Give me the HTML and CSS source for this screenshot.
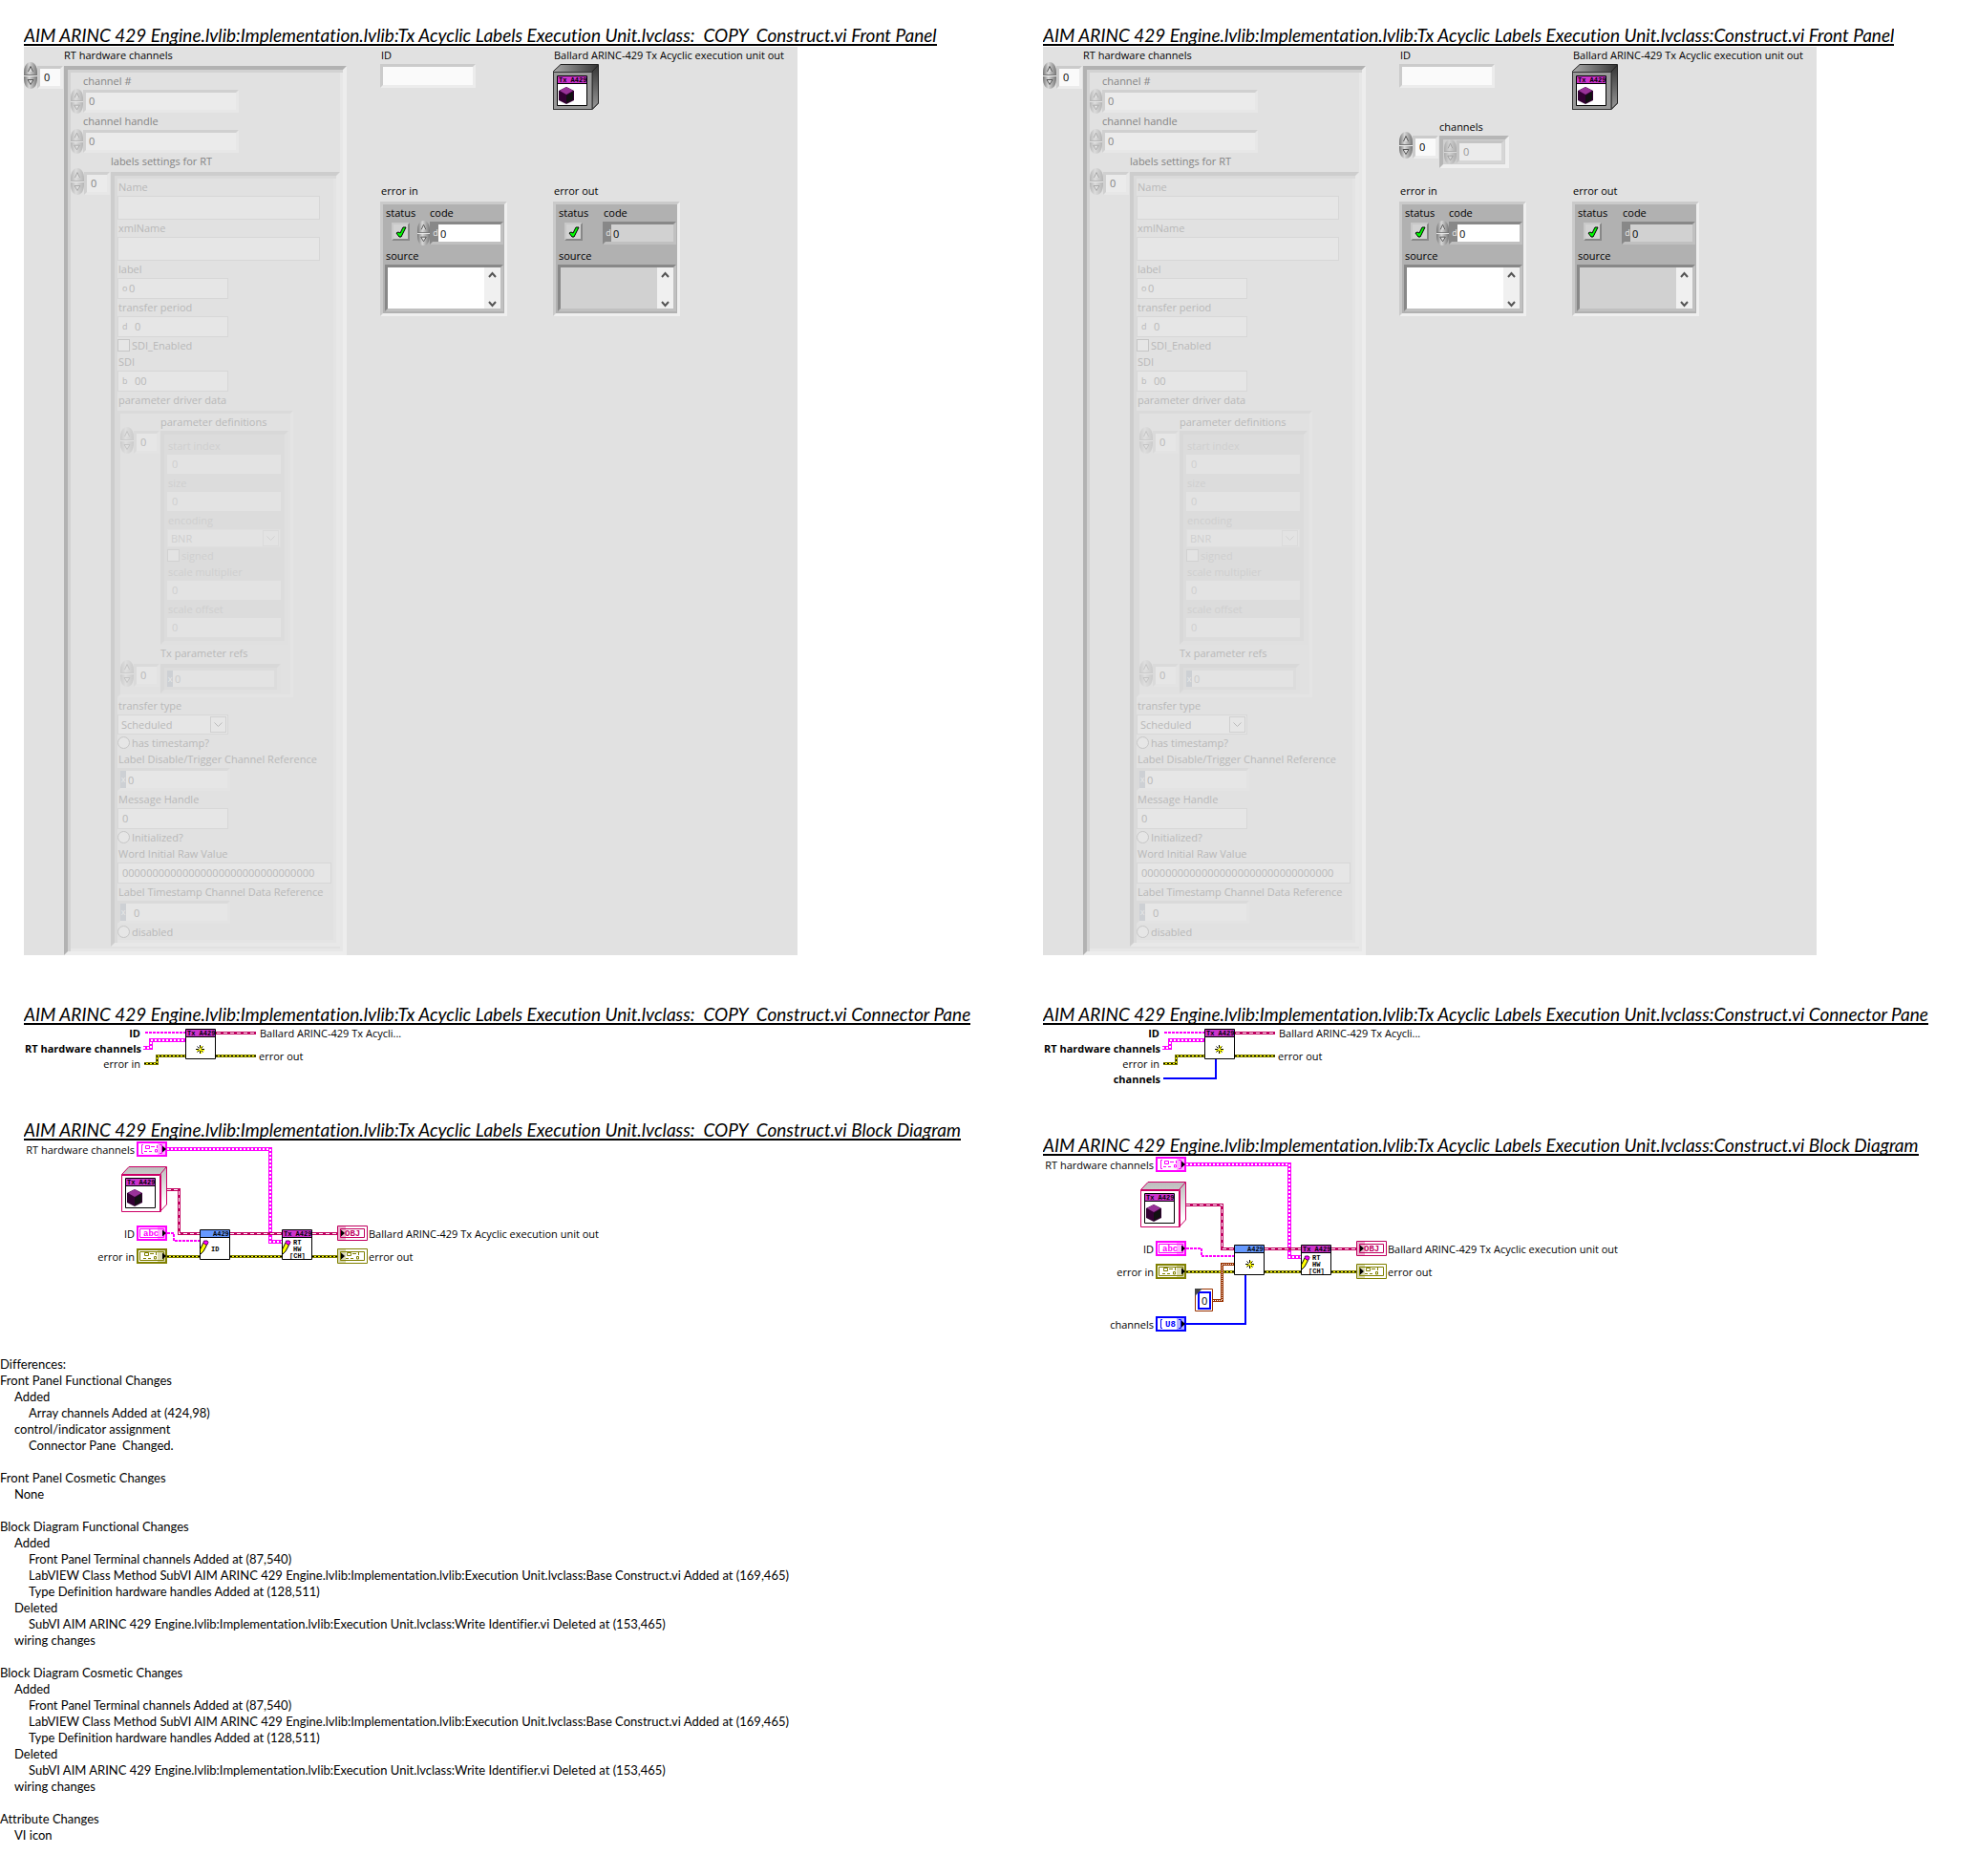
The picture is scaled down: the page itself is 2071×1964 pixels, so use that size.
FILE: index.html
```html
<!DOCTYPE html>
<html lang="en">
<head>
<meta charset="utf-8">
<title>VI comparison report</title>
<link rel="stylesheet" href="styles.css">
</head>
<body>
<svg class="defs" width="0" height="0" aria-hidden="true">
  <defs>
    <linearGradient id="metal" x1="0" x2="1" y1="0" y2="0">
      <stop offset="0" stop-color="#777"/><stop offset=".4" stop-color="#d8d8d8"/><stop offset="1" stop-color="#777"/>
    </linearGradient>
    <linearGradient id="side" x1="0" x2="0" y1="0" y2="1">
      <stop offset="0" stop-color="#333"/><stop offset="1" stop-color="#999"/>
    </linearGradient>
    <linearGradient id="top" x1="0" x2="1" y1="0" y2="0">
      <stop offset="0" stop-color="#aaa"/><stop offset="1" stop-color="#333"/>
    </linearGradient>
    <linearGradient id="pale" x1="0" x2="0" y1="0" y2="1">
      <stop offset="0" stop-color="#bbb"/><stop offset=".8" stop-color="#fff"/>
    </linearGradient>
    <symbol id="spin-up" viewBox="0 0 14 14">
      <path d="M0 14V11C0 4 3 0 7 0S14 4 14 11V14Z" fill="url(#metal)"/>
      <path d="M0 13.500H14" stroke="#777"/>
      <path d="M4.500 10L7 4.500L9.500 10" fill="#ddd" stroke="#555"/>
    </symbol>
    <symbol id="spin-down" viewBox="0 0 14 14">
      <path d="M0 0V3C0 10 3 14 7 14S14 10 14 3V0Z" fill="url(#metal)"/>
      <path d="M0 .5H14" stroke="#eee"/>
      <path d="M4 4.500H10L7 9.500Z" fill="#ddd" stroke="#555"/>
    </symbol>
    <symbol id="chevron-up" viewBox="0 0 9 7"><path d="M1 6L4.500 2L8 6" fill="none" stroke="#555" stroke-width="2"/></symbol>
    <symbol id="chevron-down" viewBox="0 0 9 7"><path d="M1 1L4.500 5L8 1" fill="none" stroke="#555" stroke-width="2"/></symbol>
    <symbol id="chevron-thin" viewBox="0 0 9 7"><path d="M.5 1.500L4.500 5.500L8.500 1.500" fill="none" stroke="#bbb"/></symbol>
    <symbol id="check" viewBox="0 0 12 12"><path d="M1 7L3 6L5 7L8 1L11 1L6 11L4 11Z" fill="#0f0" stroke="#000"/></symbol>
    <symbol id="hexcube" viewBox="0 0 16 18">
      <path d="M8 0L16 4V14L8 18L0 14V4Z" fill="#330033"/>
      <path d="M8 0L15 4L8 8L1 4Z" fill="#993399"/>
      <path d="M8 9L15 5V13L8 17Z" fill="#111"/>
    </symbol>
    <symbol id="class-face" viewBox="0 0 32 32">
      <path d="M.5 .5H31.500V31.500H.5Z" fill="#fff" stroke="#000"/>
      <path d="M1 1H31V8H1Z" fill="#cc33cc"/><path d="M0 8.500H32" stroke="#000"/>
      <text class="px" x="2" y="7">Tx A429</text>
      <use href="#hexcube" x="2" y="12" width="16" height="18"/>
    </symbol>
    <symbol id="star" viewBox="0 0 10 10">
      <path d="M5.500 1V9M1 5.500H9" stroke="#ff0" stroke-width="2"/>
      <path d="M4.500 0V3M4.500 6V9M0 4.500H3M6 4.500H9M1.500 1.500L3.500 3.500M7.500 1.500L5.500 3.500M1.500 7.500L3.500 5.500M7.500 7.500L6 6" fill="none" stroke="#000"/>
    </symbol>
    <symbol id="pencil" viewBox="0 0 10 16">
      <path d="M4 3L7.500 5.500L4 12L.5 15.500V10Z" fill="#ff0" stroke="#000"/><path d="M4.500 1H8L9 2.500L8 5H6L4 3Z" fill="#f0f" stroke="#606"/>
    </symbol>
    <symbol id="vi-purple" viewBox="0 0 32 32">
      <path d="M.5 .5H31.500V31.500H.5Z" fill="#fff" stroke="#000"/>
      <path d="M1 1H31V8H1Z" fill="#cc33cc"/><path d="M0 8.500H32" stroke="#000"/>
      <text class="px" x="2" y="7">Tx A429</text>
    </symbol>
    <symbol id="vi-blue" viewBox="0 0 32 32">
      <path d="M.5 .5H31.500V31.500H.5Z" fill="#fff" stroke="#000"/>
      <path d="M1 1H31V8H1Z" fill="#6699ff"/><path d="M0 8.500H32" stroke="#000"/>
      <text class="px" x="14" y="7">A429</text>
    </symbol>
    <symbol id="vi-handles" viewBox="0 0 32 32">
      <use href="#vi-purple" width="32" height="32"/>
      <use href="#pencil" x="0" y="11" width="10" height="16"/>
      <text class="px" x="12" y="16">RT</text><text class="px" x="12" y="23">HW</text><text class="px" x="8" y="30">[CH]</text>
    </symbol>
    <symbol id="class-const" viewBox="0 0 48 48">
      <path d="M1 8L8 .5H47.500V40L41 47H1Z" fill="url(#pale)" stroke="#cc0066"/>
      <path d="M.5 8.500H41.500V47.500H.5Z" fill="#fff" stroke="#cc0066"/><path d="M1 9.500H40.500V47" fill="none" stroke="#cc0066"/><path d="M41 8L47 1" stroke="#cc0066"/>
      <use href="#class-face" x="4" y="12" width="32" height="32"/>
    </symbol>
    <symbol id="bits" viewBox="0 0 18 8">
      <path d="M2.500 .5H6.500V3.500H2.500ZM8 1.500H12M14.500 0V3M1 6.500H4M6 6.500H9M12.500 4.500H14.500V7H12.500Z" fill="none" stroke="currentColor"/>
    </symbol>
    <symbol id="term-in" viewBox="0 0 32 16">
      <path d="M1 1H31V15H1Z" fill="#fff" stroke="currentColor" stroke-width="2"/>
      <path d="M3.500 3.500H28.500V12.500H3.500Z" fill="none" stroke="currentColor"/>
      <path d="M22 2H30V14H22Z" fill="currentColor" opacity=".3"/><path d="M27 4.500L31 8L27 11.500Z" fill="#000"/>
    </symbol>
    <symbol id="term-out" viewBox="0 0 32 16">
      <path d="M.5 .5H31.500V15.500H.5Z" fill="#fff" stroke="currentColor"/>
      <path d="M3.500 3.500H28.500V12.500H3.500Z" fill="none" stroke="currentColor"/>
      <path d="M1 1H9V15H1Z" fill="currentColor" opacity=".3"/><path d="M4 4.500L8 8L4 11.500Z" fill="#000"/>
    </symbol>
    <symbol id="term-array" viewBox="0 0 32 16">
      <path d="M1 1H31V15H1Z" fill="#fff" stroke="currentColor" stroke-width="2"/>
      <path d="M7 3.500H5.500V12.500H7M24 3.500H26.500V12.500H24" fill="none" stroke="currentColor"/>
      <path d="M22 2H30V14H22Z" fill="currentColor" opacity=".3"/><path d="M27 4.500L31 8L27 11.500Z" fill="#000"/>
    </symbol>
    <symbol id="object" viewBox="0 0 48 48">
      <path d="M.5 7.500L8 .5H47.500V41L41 47.500H.5Z" fill="url(#top)" stroke="#222"/>
      <path d="M41 8L47.500 1V41L41 47.500Z" fill="url(#side)" stroke="#222"/>
      <path d="M.5 8.500H41V47.500H.5Z" fill="#999" stroke="#333"/>
      <use href="#class-face" x="4" y="12" width="32" height="32"/>
    </symbol>
  </defs>
</svg>

<template id="hardware-channels">
  <div class="array">
    <span class="caption indented">RT hardware channels</span>
    <div class="array-body">
      <div class="index"><span class="spin"></span><input class="sunk" aria-label="RT hardware channels index" value="0"></div>
      <div class="cluster outer">
        <label class="field"><span class="caption nudge">channel #</span><span class="row"><span class="spin small"></span><input class="sunk wide" value="0"></span></label>
        <label class="field"><span class="caption nudge">channel handle</span><span class="row"><span class="spin small"></span><input class="sunk wide" value="0"></span></label>
        <span class="caption indented">labels settings for RT</span>
        <div class="array-body">
          <div class="index"><span class="spin"></span><input class="sunk" aria-label="labels settings index" value="0"></div>
          <div class="cluster labels">
            <label class="field"><span class="caption">Name</span><input class="flat tall"></label>
            <label class="field"><span class="caption">xmlName</span><input class="flat tall"></label>
            <label class="field"><span class="caption">label</span><span class="flat radix"><i>o</i><input value="0"></span></label>
            <label class="field"><span class="caption">transfer period</span><span class="flat radix spaced"><i>d</i><input value="0"></span></label>
            <label class="tick"><input type="checkbox">SDI_Enabled</label>
            <label class="field"><span class="caption">SDI</span><span class="flat radix spaced"><i>b</i><input value="00"></span></label>
            <span class="caption">parameter driver data</span>
            <div class="driver">
              <span class="caption indented">parameter definitions</span>
              <div class="array-body flush">
                <div class="index"><span class="spin"></span><input class="sunk" aria-label="parameter definitions index" value="0"></div>
                <div class="cluster definitions">
                  <label class="field"><span class="caption">start index</span><input class="faint" value="0"></label>
                  <label class="field"><span class="caption">size</span><input class="faint" value="0"></label>
                  <label class="field"><span class="caption">encoding</span><span class="choice short"><select><option>BNR</option></select><svg><use href="#chevron-thin"/></svg></span></label>
                  <label class="tick"><input type="checkbox">signed</label>
                  <label class="field"><span class="caption">scale multiplier</span><input class="faint" value="0"></label>
                  <label class="field"><span class="caption">scale offset</span><input class="faint" value="0"></label>
                </div>
              </div>
              <span class="caption indented">Tx parameter refs</span>
              <div class="array-body">
                <div class="index"><span class="spin"></span><input class="sunk" aria-label="Tx parameter refs index" value="0"></div>
                <div class="cluster refs"><span class="hex"><i>x</i><input aria-label="Tx parameter ref" value="0"></span></div>
              </div>
            </div>
            <label class="field"><span class="caption">transfer type</span><span class="choice"><select><option>Scheduled</option></select><svg><use href="#chevron-thin"/></svg></span></label>
            <label class="tick"><input type="radio">has timestamp?</label>
            <label class="field"><span class="caption">Label Disable/Trigger Channel Reference</span><span class="sunk hex"><i>x</i><input value="0"></span></label>
            <label class="field"><span class="caption">Message Handle</span><input class="flat" value="0"></label>
            <label class="tick"><input type="radio">Initialized?</label>
            <label class="field"><span class="caption">Word Initial Raw Value</span><input class="flat long" value="00000000000000000000000000000000"></label>
            <label class="field"><span class="caption">Label Timestamp Channel Data Reference</span><span class="sunk hex spaced"><i>x</i><input value="0"></span></label>
            <label class="tick"><input type="radio">disabled</label>
          </div>
        </div>
      </div>
    </div>
  </div>
</template>

<template id="errors">
  <div class="error">
    <span class="caption">error in</span>
    <div class="error-box">
      <div class="error-row">
        <div class="status"><span class="caption">status</span><button type="button" aria-label="status"><svg><use href="#check"/></svg></button></div>
        <label class="code"><span class="caption">code</span><span class="row"><span class="spin small"></span><span class="sunk hex"><i>d</i><input value="0"></span></span></label>
      </div>
      <label class="source"><span class="caption">source</span><span class="sunk"><textarea></textarea><span class="scroll"><svg><use href="#chevron-up"/></svg><svg><use href="#chevron-down"/></svg></span></span></label>
    </div>
  </div>
  <div class="error readonly">
    <span class="caption">error out</span>
    <div class="error-box">
      <div class="error-row">
        <div class="status"><span class="caption">status</span><button type="button" aria-label="status"><svg><use href="#check"/></svg></button></div>
        <label class="code"><span class="caption">code</span><span class="row"><span class="sunk hex"><i>d</i><input value="0" readonly></span></span></label>
      </div>
      <label class="source"><span class="caption">source</span><span class="sunk"><textarea readonly></textarea><span class="scroll"><svg><use href="#chevron-up"/></svg><svg><use href="#chevron-down"/></svg></span></span></label>
    </div>
  </div>
</template>

<main class="compare">
  <section class="version">
    <h2>AIM ARINC 429 Engine.lvlib:Implementation.lvlib:Tx Acyclic Labels Execution Unit.lvclass:&nbsp; COPY&nbsp; Construct.vi Front Panel</h2>
    <div class="panel">
      <div data-template="hardware-channels"></div>
      <div class="controls">
        <label class="field"><span class="caption">ID</span><input class="sunk id"></label>
        <div class="field"><span class="caption">Ballard ARINC-429 Tx Acyclic execution unit out</span><svg class="object"><use href="#object"/></svg></div>
        <div class="channels"></div>
        <div class="errors" data-template="errors"></div>
      </div>
    </div>
    <h2>AIM ARINC 429 Engine.lvlib:Implementation.lvlib:Tx Acyclic Labels Execution Unit.lvclass:&nbsp; COPY&nbsp; Construct.vi Connector Pane</h2>
    <svg class="diagram" width="500" height="47">
      <g class="wires">
        <path class="string" d="M127 7H169"/>
        <path class="pink" d="M125 23H133V15H169"/><path class="hatch" d="M125 23H133V15H169"/>
        <path class="olive" d="M126 39.500H139.500V31.500H169M201 31.500H243"/><path class="yellow" d="M126 39.500H139.500V31.500H169M201 31.500H243"/><path class="dots" d="M126 39.500H139.500V31.500H169M201 31.500H243"/>
        <path class="red" d="M201 7.500H243"/><path class="dash" d="M202 7.500H242"/>
      </g>
      <use href="#vi-purple" x="169" y="3" width="32" height="32"/><use href="#star" x="180" y="20" width="10" height="10"/>
      <text class="end bold" x="122" y="12">ID</text><text class="end bold" x="123" y="28">RT hardware channels</text><text class="end" x="122" y="44">error in</text>
      <text x="247" y="12">Ballard ARINC-429 Tx Acycli...</text><text x="246" y="36">error out</text>
    </svg>
    <h2>AIM ARINC 429 Engine.lvlib:Implementation.lvlib:Tx Acyclic Labels Execution Unit.lvclass:&nbsp; COPY&nbsp; Construct.vi Block Diagram</h2>
    <svg class="diagram" width="700" height="130">
      <g class="wires">
        <path class="pink" d="M150 8H258V105H270"/><path class="hatch" d="M150 8H258V105H270"/>
        <path class="red" d="M150 50.500H162.500V96.500H184M216 96.500H270M302 96.500H328"/><path class="dash" d="M150 50.500H162.500V96.500H184M216 96.500H270M302 96.500H328"/>
        <path class="string" d="M150 96H157V104H184"/>
        <path class="olive" d="M150 120.500H184M216 120.500H270M302 120.500H328"/><path class="yellow" d="M150 120.500H184M216 120.500H270M302 120.500H328"/><path class="dots" d="M150 120.500H184M216 120.500H270M302 120.500H328"/>
      </g>
      <g class="c-pink"><use href="#term-array" x="118" width="32" height="16"/><use href="#bits" x="125" y="4" width="18" height="8"/><use href="#term-in" x="118" y="88" width="32" height="16"/><text class="type" x="125" y="99">abc</text></g>
      <g class="c-olive"><use href="#term-in" x="118" y="112" width="32" height="16"/><use href="#bits" x="124" y="116" width="18" height="8"/><use href="#term-out" x="328" y="112" width="32" height="16"/><use href="#bits" x="336" y="116" width="18" height="8"/></g>
      <g class="c-red"><use href="#term-out" x="328" y="88" width="32" height="16"/><text class="type" x="336" y="99">OBJ</text></g>
      <use href="#class-const" x="102" y="26" width="48" height="48"/>
      <use href="#vi-blue" x="184" y="92" width="32" height="32"/><use href="#pencil" x="184" y="103" width="10" height="16"/><text class="px" x="196" y="115">ID</text>
      <use href="#vi-handles" x="270" y="92" width="32" height="32"/>
      <text class="end" x="116" y="13">RT hardware channels</text><text class="end" x="116" y="101">ID</text><text class="end" x="116" y="125">error in</text>
      <text x="361" y="101">Ballard ARINC-429 Tx Acyclic execution unit out</text><text x="361" y="125">error out</text>
    </svg>
  </section>

  <section class="version">
    <h2>AIM ARINC 429 Engine.lvlib:Implementation.lvlib:Tx Acyclic Labels Execution Unit.lvclass:Construct.vi Front Panel</h2>
    <div class="panel">
      <div data-template="hardware-channels"></div>
      <div class="controls">
        <label class="field"><span class="caption">ID</span><input class="sunk id"></label>
        <div class="field"><span class="caption">Ballard ARINC-429 Tx Acyclic execution unit out</span><svg class="object"><use href="#object"/></svg></div>
        <div class="channels">
          <span class="caption indented">channels</span>
          <div class="array-body flush">
            <div class="index"><span class="spin"></span><input class="sunk" aria-label="channels index" value="0"></div>
            <div class="cluster element"><span class="row"><span class="spin small"></span><input class="sunk" aria-label="channel" value="0"></span></div>
          </div>
        </div>
        <div class="errors" data-template="errors"></div>
      </div>
    </div>
    <h2>AIM ARINC 429 Engine.lvlib:Implementation.lvlib:Tx Acyclic Labels Execution Unit.lvclass:Construct.vi Connector Pane</h2>
    <svg class="diagram" width="500" height="63">
      <g class="wires">
        <path class="string" d="M127 7H169"/>
        <path class="pink" d="M125 23H133V15H169"/><path class="hatch" d="M125 23H133V15H169"/>
        <path class="olive" d="M126 39.500H139.500V31.500H169M201 31.500H243"/><path class="yellow" d="M126 39.500H139.500V31.500H169M201 31.500H243"/><path class="dots" d="M126 39.500H139.500V31.500H169M201 31.500H243"/>
        <path class="red" d="M201 7.500H243"/><path class="dash" d="M202 7.500H242"/>
        <path class="blue" d="M126 55H181V35"/>
      </g>
      <use href="#vi-purple" x="169" y="3" width="32" height="32"/><use href="#star" x="180" y="20" width="10" height="10"/>
      <text class="end bold" x="122" y="12">ID</text><text class="end bold" x="123" y="28">RT hardware channels</text><text class="end" x="122" y="44">error in</text><text class="end bold" x="123" y="60">channels</text>
      <text x="247" y="12">Ballard ARINC-429 Tx Acycli...</text><text x="246" y="36">error out</text>
    </svg>
    <h2>AIM ARINC 429 Engine.lvlib:Implementation.lvlib:Tx Acyclic Labels Execution Unit.lvclass:Construct.vi Block Diagram</h2>
    <svg class="diagram" width="700" height="190">
      <g class="wires">
        <path class="pink" d="M150 8H258V105H270"/><path class="hatch" d="M150 8H258V105H270"/>
        <path class="red" d="M150 50.500H187.500V96.500H200M232 96.500H270M302 96.500H328"/><path class="dash" d="M150 50.500H187.500V96.500H200M232 96.500H270M302 96.500H328"/>
        <path class="string" d="M150 96H166V104H200"/>
        <path class="olive" d="M150 120.500H200M232 120.500H270M302 120.500H328"/><path class="yellow" d="M150 120.500H200M232 120.500H270M302 120.500H328"/><path class="dots" d="M150 120.500H200M232 120.500H270M302 120.500H328"/>
        <path class="brown" d="M178 150.500H187.500V112.500H200"/><path class="grain" d="M178 150.500H187.500V112.500H200"/>
        <path class="blue" d="M150 175H212V124"/>
      </g>
      <g class="c-pink"><use href="#term-array" x="118" width="32" height="16"/><use href="#bits" x="125" y="4" width="18" height="8"/><use href="#term-in" x="118" y="88" width="32" height="16"/><text class="type" x="125" y="99">abc</text></g>
      <g class="c-olive"><use href="#term-in" x="118" y="112" width="32" height="16"/><use href="#bits" x="124" y="116" width="18" height="8"/><use href="#term-out" x="328" y="112" width="32" height="16"/><use href="#bits" x="336" y="116" width="18" height="8"/></g>
      <g class="c-red"><use href="#term-out" x="328" y="88" width="32" height="16"/><text class="type" x="336" y="99">OBJ</text></g>
      <g class="c-blue"><use href="#term-array" x="118" y="167" width="32" height="16"/><text class="type" x="128" y="178">U8</text></g>
      <use href="#class-const" x="102" y="26" width="48" height="48"/>
      <use href="#vi-blue" x="200" y="92" width="32" height="32"/><use href="#star" x="212" y="108" width="10" height="10"/>
      <use href="#vi-handles" x="270" y="92" width="32" height="32"/>
      <path d="M159.500 138.500H177.500V161.500H159.500Z" fill="#fff" stroke="#993300"/>
      <path d="M163 142H175V159H163Z" fill="#fff" stroke="#0000ff" stroke-width="2"/>
      <path d="M159 138H167L159 146Z" fill="#444"/>
      <text x="166" y="155">0</text>
      <text class="end" x="116" y="13">RT hardware channels</text><text class="end" x="116" y="101">ID</text><text class="end" x="116" y="125">error in</text><text class="end" x="116" y="180">channels</text>
      <text x="361" y="101">Ballard ARINC-429 Tx Acyclic execution unit out</text><text x="361" y="125">error out</text>
    </svg>
  </section>
</main>

<section class="differences">
  <p>Differences:</p>
  <dl>
    <dt>Front Panel Functional Changes</dt>
    <dd>Added</dd>
    <dd class="detail">Array channels Added at (424,98)</dd>
    <dd>control/indicator assignment</dd>
    <dd class="detail">Connector Pane&nbsp; Changed.</dd>
  </dl>
  <dl>
    <dt>Front Panel Cosmetic Changes</dt>
    <dd>None</dd>
  </dl>
  <dl>
    <dt>Block Diagram Functional Changes</dt>
    <dd>Added</dd>
    <dd class="detail">Front Panel Terminal channels Added at (87,540)</dd>
    <dd class="detail">LabVIEW Class Method SubVI AIM ARINC 429 Engine.lvlib:Implementation.lvlib:Execution Unit.lvclass:Base Construct.vi Added at (169,465)</dd>
    <dd class="detail">Type Definition hardware handles Added at (128,511)</dd>
    <dd>Deleted</dd>
    <dd class="detail">SubVI AIM ARINC 429 Engine.lvlib:Implementation.lvlib:Execution Unit.lvclass:Write Identifier.vi Deleted at (153,465)</dd>
    <dd>wiring changes</dd>
  </dl>
  <dl>
    <dt>Block Diagram Cosmetic Changes</dt>
    <dd>Added</dd>
    <dd class="detail">Front Panel Terminal channels Added at (87,540)</dd>
    <dd class="detail">LabVIEW Class Method SubVI AIM ARINC 429 Engine.lvlib:Implementation.lvlib:Execution Unit.lvclass:Base Construct.vi Added at (169,465)</dd>
    <dd class="detail">Type Definition hardware handles Added at (128,511)</dd>
    <dd>Deleted</dd>
    <dd class="detail">SubVI AIM ARINC 429 Engine.lvlib:Implementation.lvlib:Execution Unit.lvclass:Write Identifier.vi Deleted at (153,465)</dd>
    <dd>wiring changes</dd>
  </dl>
  <dl>
    <dt>Attribute Changes</dt>
    <dd>VI icon</dd>
  </dl>
</section>
<script src="script.js"></script>
</body>
</html>
```
FILE: styles.css
```css
* { box-sizing: border-box; }
body { margin: 0; background: #fff; color: #000; font: 11px/18px "Open Sans", "Noto Sans", sans-serif; }
.defs { display: block; }
input, textarea, select, button { font: inherit; color: inherit; margin: 0; padding: 0; border: 0; border-radius: 0; background: none; min-width: 0; appearance: none; outline: 0; }

.compare { display: grid; grid-template-columns: 1067fr 979fr; padding: 26px 0 0 25px; }
.version { display: flex; flex-direction: column; align-items: flex-start; min-width: 0; }
h2 { margin: 51px 0 1px; height: 22px; border-bottom: 2px solid #000; overflow: hidden; font: italic 19px/22px Lato, sans-serif; font-variant-ligatures: none; white-space: nowrap; }
h2:first-child { margin-top: 0; }

/* Front panel */
.panel { display: flex; background: #e1e1e1; }
.caption { display: block; height: 18px; white-space: nowrap; }
.caption.indented { padding-left: 42px; }
.caption.nudge { padding-left: 13px; }
.field { display: block; }
.field > input { display: block; }
.row { display: flex; align-items: center; }
.array-body { display: flex; align-items: flex-start; margin-top: 2px; }
.array-body.flush { margin-top: 0; }
.index { display: flex; flex: none; align-items: flex-start; width: 42px; }
.index .spin { margin-top: -4px; }
.index .sunk { width: 27px; height: 24px; }

.spin { display: flex; flex: none; flex-direction: column; width: 14px; height: 28px; }
.spin.small { width: 13px; height: 26px; margin: -2px 0; }
.spin button { flex: 1; display: flex; min-height: 0; }
.spin svg { width: 100%; height: 100%; }

.sunk { border: 3px solid; border-color: #cbcbcb #ececec #ececec #cbcbcb; background: #fafafa; height: 24px; padding: 0 0 2px 4px; }
.sunk.wide { width: 163px; padding-left: 3px; }
.sunk.id { width: 100px; height: 25px; }

.cluster { border: 4px solid; padding: 3px; }
.outer { width: 296px; padding-bottom: 5px; color: #848484; border-color: #b2b2b2 #ededed #ededed #b2b2b2; box-shadow: inset 3px 3px #d2d2d2, inset -3px -3px #e7e7e7; }
.outer .sunk { background: #ebebeb; border-color: #d0d0d0 #e7e7e7 #e7e7e7 #d0d0d0; }
.outer .spin { opacity: .4; }
.labels { flex: 1; color: #b8b8b8; border-color: #cdcdcd #e8e8e8 #e8e8e8 #cdcdcd; box-shadow: inset 3px 3px #dadada, inset -3px -3px #e4e4e4; }
.labels .caption:not(.indented) { padding-left: 1px; }
.labels .sunk { background: #e6e6e6; border-color: #dadada #e3e3e3 #e3e3e3 #dadada; }
.labels .spin { opacity: .2; }
.flat { display: block; width: 116px; height: 22px; padding: 0 0 1px 4px; border: 1px solid #d7d7d7; background: #e6e6e6; }
.flat.tall { width: 212px; height: 25px; }
.flat.long { width: 224px; }
.radix { display: flex; align-items: center; }
.radix i, .hex i { font-style: normal; font-size: 9px; }
.radix i { width: 7px; }
.radix.spaced i { width: 13px; }
.radix input, .hex input { flex: 1; width: 0; }
.tick { display: flex; align-items: center; gap: 2px; height: 17px; }
.tick input { width: 13px; height: 13px; border: 1px solid #c6c6c6; background: #e6e6e6; }
.tick input[type="radio"] { border-radius: 50%; }
.driver { width: 184px; height: 300px; margin-top: 2px; border: 3px solid; border-color: #dadada #e4e4e4 #e4e4e4 #dadada; }
.definitions { width: 134px; background: #dcdcdc; color: #cfcfcf; border-color: #d8d8d8 #e0e0e0 #e0e0e0 #d8d8d8; }
.definitions .tick input { border-color: #d2d2d2; background: #e3e3e3; }
.faint { width: 119px; height: 21px; padding: 0 0 1px 5px; background: #e3e3e3; border-bottom: 1px solid #dcdcdc; }
.refs { width: 126px; height: 31px; background: #dcdcdc; color: #cacaca; border-color: #d8d8d8 #e0e0e0 #e0e0e0 #d8d8d8; }
.refs .hex { height: 17px; background: #e3e3e3; }
.hex { display: flex; align-items: stretch; line-height: 17px; }
.hex i { flex: none; width: 6px; background: #cdd0d4; color: #e8e8e8; text-align: center; }
.hex input { padding-left: 2px; }
.labels .sunk.hex { width: 118px; padding: 0; }
.hex.spaced input { padding-left: 8px; }
.choice { display: flex; align-items: center; width: 116px; height: 21px; padding: 1px; border: 1px solid #d7d7d7; background: #e6e6e6; }
.choice.short { width: 119px; height: 19px; background: #e3e3e3; border-color: #dfdfdf; }
.choice select { flex: 1; padding-left: 2px; }
.choice svg { width: 17px; height: 17px; padding: 4px 3px; border: 1px solid #d0d0d0; }
.short svg { opacity: .4; }

.controls { display: grid; grid-template-columns: 181px 256px; grid-template-rows: 75px 67px auto; align-content: start; padding-left: 35px; }
.controls .caption:not(.indented) { padding-left: 1px; }
.object { display: block; width: 48px; height: 48px; }
.channels { grid-column: 1 / 3; }
.element { width: 73px; height: 34px; padding: 1px; background: #d0d0d0; border-color: #b6b6b6 #efefef #efefef #b6b6b6; color: #999; }
.element .spin { opacity: .4; }
.element .sunk { width: 50px; background: #ebebeb; border-color: #c4c4c4 #d6d6d6 #d6d6d6 #c4c4c4; }

.errors { display: grid; grid-column: 1 / 3; grid-template-columns: 181px 256px; }
.error-box { width: 133px; height: 120px; margin-top: 2px; border: 3px solid; border-color: #cacaca #efefef #efefef #cacaca; background: #b1b1b1; padding: 0 1px 0 2px; }
.error-row { display: flex; justify-content: space-between; height: 45px; }
.status button { display: flex; align-items: center; justify-content: center; width: 19px; height: 19px; margin: 1px 0 0 7px; border: 2px solid; border-color: #c8c8c8 #888 #888 #c8c8c8; background: #d2d2d2; }
.status svg { width: 12px; height: 12px; }
.controls .code .caption { padding-left: 13px; }
.code .sunk { flex: none; width: 77px; padding: 0; border-color: #888 #c0c0c0 #c0c0c0 #888; background: #fff; }
.code .hex i { background: #888; }
.controls .readonly .code .caption { padding-left: 1px; }
.source .sunk { display: flex; height: 49px; padding: 0; border-color: #888 #c0c0c0 #c0c0c0 #888; background: #fff; }
.source textarea { flex: 1; resize: none; overflow: hidden; }
.readonly .code .sunk, .readonly .source .sunk { background: #d1d1d1; }
.scroll { display: flex; flex-direction: column; justify-content: space-between; align-items: center; width: 17px; padding: 4px 0 1px; background: #f0f0f0; }
.scroll svg { width: 9px; height: 7px; }

/* Diagrams */
.diagram { display: block; max-width: 100%; font: 11px "Open Sans", "Noto Sans", sans-serif; }
.wires { fill: none; shape-rendering: crispEdges; }
.end { text-anchor: end; }
.bold { font-weight: 700; }
.px { font: bold 7px "Liberation Mono", monospace; fill: #000; }
.type { font: bold 9px "Liberation Mono", monospace; fill: currentColor; }
.string { stroke: #f0f; stroke-width: 2; stroke-dasharray: 3 1; }
.pink { stroke: #f0f; stroke-width: 4; }
.hatch { stroke: #fff; stroke-width: 2; stroke-dasharray: 2 2; }
.red { stroke: #c0005f; stroke-width: 3; }
.dash { stroke: #fff; stroke-width: 1; stroke-dasharray: 4 3; }
.olive { stroke: #808000; stroke-width: 3; }
.yellow { stroke: #ff0; stroke-width: 1; }
.dots { stroke: #000; stroke-width: 1; stroke-dasharray: 2 2; }
.brown { stroke: #993300; stroke-width: 3; }
.grain { stroke: #fff; stroke-width: 1; stroke-dasharray: 1 1; }
.blue { stroke: #00f; stroke-width: 2; }
.c-pink { color: #f0f; }
.c-olive { color: #808000; }
.c-red { color: #c0005f; }
.c-blue { color: #00f; }

/* Differences list */
.differences { margin-top: 19px; font: 13px/17px Lato, sans-serif; font-variant-ligatures: none; white-space: nowrap; }
.differences p, .differences dl, .differences dd { margin: 0; }
.differences dl + dl { margin-top: 17px; }
.differences dd { padding-left: 15px; }
.differences .detail { padding-left: 30px; }
```
FILE: script.js
```js
// Fill each slot with the controls that both versions of the panel share.
document.querySelectorAll('[data-template]').forEach(function (slot) {
  slot.append(document.getElementById(slot.dataset.template).content.cloneNode(true));
});

// Every numeric control has an increment and a decrement button.
document.querySelectorAll('.spin').forEach(function (spin) {
  spin.innerHTML =
    '<button type="button" aria-label="Increment"><svg><use href="#spin-up"/></svg></button>' +
    '<button type="button" aria-label="Decrement"><svg><use href="#spin-down"/></svg></button>';
});
```
